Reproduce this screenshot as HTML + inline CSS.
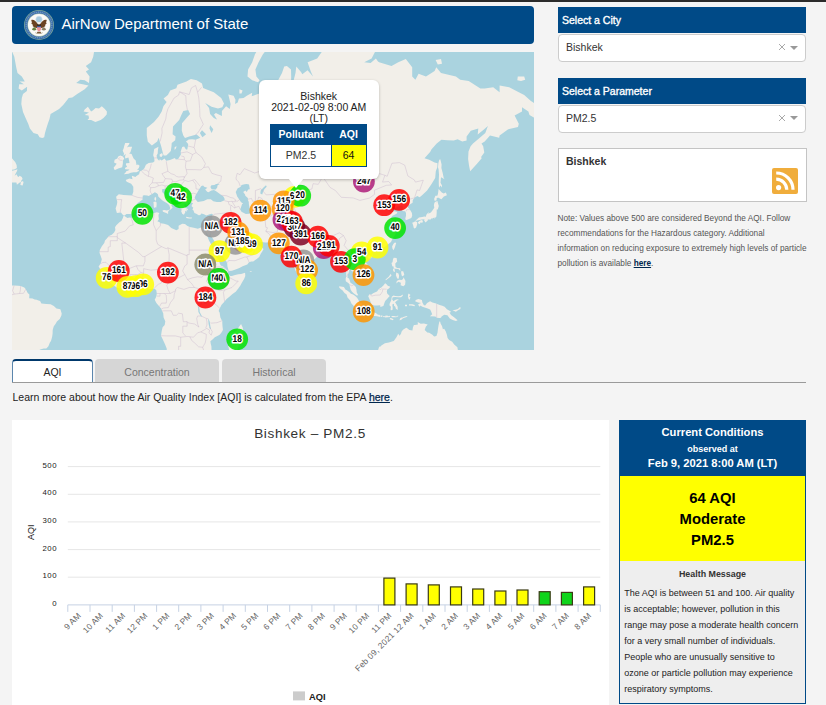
<!DOCTYPE html>
<html><head><meta charset="utf-8"><title>AirNow Department of State</title>
<style>
*{box-sizing:border-box;margin:0;padding:0}
html,body{width:826px;height:705px;overflow:hidden}
body{background:#f4f4f4;font-family:"Liberation Sans",sans-serif;font-size:10.5px;color:#222;position:relative}
.abs{position:absolute}
#topbar{left:0;top:0;width:826px;height:2px;background:#2b2b2b}
#hdr{left:12px;top:6px;width:522px;height:38px;background:#004a87;border-radius:4px}
#hdr .t{left:49.5px;top:9px;font-size:15px;line-height:18px;color:#fff;white-space:nowrap}
#map{left:12px;top:52px;width:522px;height:298px;background:#aad3df;overflow:hidden}
#mk{transform:scale(.84,1)}
#mk text{text-rendering:geometricPrecision;font-size:9.9px;font-weight:bold;text-anchor:middle;fill:#000;stroke:#fff;stroke-width:3.1px;paint-order:stroke;stroke-linejoin:round;font-family:"Liberation Sans",sans-serif}
.bh{left:557.5px;width:248.5px;height:26px;background:#004a87;color:#fff;font-size:10.5px;line-height:26px;padding-left:4.5px;-webkit-text-stroke:.35px #fff}
.dd{left:557.5px;width:248.5px;height:28px;background:#fff;border:1px solid #ccc;border-radius:4px;font-size:10.5px;line-height:24.6px;padding-left:7.5px;color:#333}
.dd .x{position:absolute;left:219px;top:8px;width:8px;height:8px}
.dd .a{position:absolute;left:231px;top:10.5px;width:0;height:0;border:4px solid transparent;border-top:4px solid #999;border-bottom:0}
#city{left:557.5px;top:148px;width:249px;height:54px;background:#fff;border:1px solid #c4c4c4}
#city b{position:absolute;left:7.5px;top:6px;font-size:10.5px;color:#333}
#rss{left:772px;top:168px;width:26px;height:26px;background:#f0ad3c;border-radius:2px}
#note{left:557.5px;top:210.5px;width:262px;font-size:8.25px;line-height:15px;color:#555;white-space:nowrap}
#note a,#learn a{color:#00264d;font-weight:bold;text-decoration:underline}
#learn a{font-weight:normal;-webkit-text-stroke:.25px #00264d}
.tab{top:359px;height:23px;font-size:10.5px;line-height:27px;text-align:center;border-radius:4px 4px 0 0}
#t1{left:12px;width:81px;background:#fff;border:1px solid #5b86ad;border-top:2px solid #00386b;border-bottom:0;color:#222;line-height:22px}
#t2{left:95px;width:124px;background:#d6d6d6;color:#777}
#t3{left:222px;width:104px;background:#d6d6d6;color:#777}
#tline{left:12px;top:381.5px;width:794px;height:1px;background:#9a9a9a}
#learn{left:12.5px;top:391px;font-size:10.5px;line-height:13px;color:#222;white-space:nowrap}
#chart{left:12px;top:420px;width:596.5px;height:290px;background:#fff}
#cc{left:619px;top:420px;width:187px;height:284px;border:1px solid #004a87;background:#eee}
#cc .h{left:-1px;top:-1px;width:187px;height:56px;background:#004a87;color:#fff;text-align:center;font-weight:bold}
#cc .y{left:0;top:55px;width:185px;height:84.5px;background:#ffff00;color:#000;text-align:center;font-weight:bold;font-size:14.8px;line-height:21px;padding-top:11.5px}
#cc .hm{left:0;top:147.5px;width:185px;text-align:center;font-weight:bold;font-size:8.9px;line-height:10px;color:#333}
#cc .tx{left:4.2px;top:164px;width:185px;font-size:9px;line-height:16px;color:#222;white-space:nowrap}
#pop{left:259px;top:80px;width:119.5px;height:98.5px;background:#fff;border-radius:6px;box-shadow:0 1px 3px rgba(0,0,0,.25)}
#pop .l{left:0;width:119.5px;text-align:center;font-size:10.5px;line-height:11px;color:#222}
#tip{left:288px;top:178px;width:0;height:0;border-left:8px solid transparent;border-right:8px solid transparent;border-top:10px solid #fff}
#ptab{left:270px;top:124px;width:97px;height:42.5px;border:1px solid #004a87;background:#fff}
</style></head><body>
<div id="topbar" class="abs"></div>
<div id="hdr" class="abs">
<svg class="abs" style="left:12px;top:4px" width="30" height="30" viewBox="0 0 30 30"><circle cx="15" cy="15" r="15" fill="#7fa89a"/><circle cx="15" cy="15" r="14.3" fill="#3d6fa8"/><circle cx="15" cy="15" r="12.8" fill="none" stroke="#6f97c6" stroke-width="1.3" stroke-dasharray="1.1 .8"/><circle cx="15" cy="15" r="11.5" fill="#b9cdb4"/><circle cx="15" cy="15" r="11" fill="#fbfaf7"/><circle cx="15" cy="9.4" r="3.2" fill="#a8cbdf" stroke="#d4e4ee" stroke-width=".6"/><path d="M14 14.6C12.6 11.6 10 9.3 7.3 9.9c.1 1.3.4 2 .9 2.6-.5.1-.8.3-1 .6.5 1 1.200 1.600 2 2-.4.3-.6.6-.7 1 1.100 1 2.500 1.700 4.200 2.100z" fill="#6a4322"/><path d="M16 14.600C17.400 11.600 20 9.300 22.700 9.900c-.1 1.300-.4 2-.9 2.600.5.100.8.300 1 .6-.5 1-1.200 1.600-2 2 .4.300.6.600.7 1-1.100 1-2.500 1.700-4.200 2.100z" fill="#6a4322"/><ellipse cx="15" cy="16" rx="2" ry="3" fill="#3b2a22"/><circle cx="15" cy="13.200" r="1.200" fill="#f3efe6"/><path d="M13 16h4v3c0 1.300-1 2-2 2.400-1-.4-2-1.100-2-2.400z" fill="#e8737a"/><path d="M13 16h4v1.300h-4z" fill="#3b5a9a"/><path d="M13.800 17.300v3.500M15 17.300v4M16.200 17.300v3.500" stroke="#f6d8d8" stroke-width=".45"/><path d="M12.600 19.500c-1.500 1.200-3 1.300-4.600.3.300-1.600 1.400-2.600 2.800-2.500z" fill="#66803f"/><path d="M17.400 19.500c1.500 1.200 3 1.300 4.600.3-.3-1.600-1.400-2.600-2.800-2.500z" fill="#8a7d62"/><path d="M13.300 21.800h3.400l.8 2.200h-5z" fill="#7a5a3a"/><path d="M11 22.500c2.500 1.500 5.500 1.500 8 0" fill="none" stroke="#c9c3ae" stroke-width=".8"/></svg>
<div class="t abs">AirNow Department of State</div></div>
<div id="map" class="abs"><svg id="mapsvg" width="522" height="298" viewBox="0 0 522 298"><path d="M178.9,27 184.7,28.3 190,31.6 191.1,35.9 195.4,37.8 201.8,40.2 209.2,46 212,51.6 210.3,55.3 206,56.4 199.6,54.8 193.2,51 197.1,55.9 198.1,62.1 201.8,66 205,67.5 202,62.6 203.9,61.1 209.9,64.1 209.9,59 214.1,54.3 217.8,56.9 218.6,52.1 216.3,42.5 221.6,43.7 223.5,47.7 223.1,52.1 225.7,50.5 226.9,46.6 231.6,46 234.8,43.7 240.2,40.8 239.7,44.3 244.4,42.5 247.6,41.4 250.8,43.1 253,40.2 253,35.9 257.2,35.3 262.6,39 269,44.3 266.8,40.2 266.4,34.1 266.4,27.7 270,21 272.2,14.6 274.9,13.9 279,17.5 279.2,24.4 279,34.1 280.7,40.2 279.6,46 276.4,53.2 273.2,53.7 277.5,55.3 282.8,48.8 282.8,41.9 281.8,37.2 281.8,27.7 283.5,21 284.3,14.6 289.2,20.3 290.3,22.3 295.6,18.2 301,24.4 298.8,19.6 295.6,10.2 305.2,6.4 313.8,-5.8 324.4,-10.2 333,-12.8 346.4,-26.1 351.1,-19.3 361.8,-10.2 366,-5.8 359.6,6.4 352.2,10.2 358.6,10.9 363.9,6.4 366,9.4 367.1,10.2 379.5,13.9 386.3,10.2 393.8,7.1 400.2,15.3 400.2,24.4 403.4,27.7 406.6,21.7 414,24.4 422.6,18.9 424.3,15.3 429,21 443.9,24.4 448.2,27.7 456.7,29 468.4,36.6 472.7,36.6 481.2,35.3 487.6,40.2 487.6,33.5 497.2,35.3 506.8,40.2 512.2,43.1 518.6,48.8 529.9,56.4 527.1,59.5 523.9,64.6 521.8,65.6 517.5,63.1 516.4,59.5 510,55.3 510,59.5 502.6,63.6 506.8,71.8 506,75.1 496.2,77.3 487.6,83.5 487.2,85.7 478,83.5 472.7,89.4 469.5,91.5 471.2,94.3 472.3,100.6 469.1,105.1 469.7,106.2 465,111.7 458.2,119.3 457.1,114.1 456.1,107 456.5,99.4 458.6,94.3 461,91.5 468.4,85.2 473.3,80.9 475.9,74.1 471.6,77.8 465.7,82.6 466.3,76.4 458.8,78.7 454.6,84.4 454.6,88.6 450.3,89.4 445.6,87.3 441.8,88.6 435.4,88.2 429.4,87.8 424.7,91.5 419.4,97.5 418.3,99.8 412.5,106.2 417.2,107.7 422.6,110.6 425.5,111.3 425.3,115.2 423.8,119.3 423.2,126 419.4,132.3 415.1,138.5 409.8,143.5 407.6,145.3 405.3,144.1 402.9,145.6 400.8,147.9 400.6,150.7 396.1,153.5 395.9,155.2 398.5,158.4 399.9,161.1 400.2,163.8 399.3,166.1 395.9,167.4 393.8,168.2 393.3,166.4 394,163.8 394,161.1 393.1,159.3 390.6,159 389.9,158.2 391,156.5 390.6,154.1 388.9,153.5 386.3,154.3 382.5,156.3 383.1,154.3 384.6,151 382.5,150.4 379.7,153 377.5,155.2 375,155.7 375.2,157.6 377.5,159 377.8,160.6 380.5,159.8 381.6,159 384.2,159.8 385.4,160.1 384.6,161.7 380.5,163.8 378.4,166.4 380.5,168.2 381.8,171.6 383.5,174.1 383.9,175.1 383.9,176.6 381.6,178.3 384.4,179.3 383.3,182.7 380.7,186.3 379,189.9 376.1,192.3 373.1,194.8 369.2,196.5 367.5,197.4 365.4,198.3 362,199.2 359.4,199.9 359.2,202 358.1,201.3 357.7,199.2 354.9,199 352.6,200.4 350.5,202.6 349.4,204.9 350.9,207.2 353.4,210.5 354.7,211.4 356.2,213.8 357.1,217.1 356.9,220.4 355.8,222.2 353.2,223.7 352.2,223.9 351.1,225.8 347.5,227.8 347.7,225.2 346.8,223.9 344.7,223.5 343.6,221.5 342.1,220 339.4,218.9 339.1,217.3 338.3,217.1 337.2,217.8 337.1,220.4 335.7,222.8 335.5,225.8 337,226.5 337.7,228.2 338.5,230.8 340.9,232.3 341.9,232.9 343.8,234.9 344.5,237.7 344.7,240.2 346.2,243.2 344.7,243.4 341.9,241.5 340,239.8 338.7,237.7 337.9,234.7 337.4,232.5 336.6,231.2 333.8,229.3 333.6,226.9 334.2,224.8 334.2,220.8 334.2,218.2 333.2,216 332.5,213.2 332.1,210.5 330.8,209.4 329.1,210.3 327.2,210.9 326.6,212.1 324.9,211.8 325.5,208.3 323.8,205.4 322.3,202.6 320.6,200.4 319.7,197.4 318,196.9 315.9,198.1 313.8,198.8 310.6,199 309.5,199.2 308.9,202 306.9,203.1 303.3,206.5 301.6,207.8 297.3,210.9 296.3,212.1 294.8,213.8 295.2,218 294.1,221.5 294.1,224.1 292.4,226.3 289.2,228.9 287.1,226.9 286.5,224.8 284.5,220.6 283.5,218.4 281.8,213.8 281.3,212.7 280.3,209.4 279.2,204.9 279.2,202.2 279,199.9 278.6,197.6 277.9,199.7 275.4,200.6 275.2,201 272.4,199 270.9,197.4 273.2,196.2 273.7,196 271.1,196.2 270,195.1 269,194.1 267.7,193.4 266.6,191.6 265.8,190.1 261.7,190.6 256.8,190.6 253.2,190.4 249.8,190.1 247,189.4 245.5,187.5 244,186.1 241.2,187.3 239.1,187.1 234.8,184.4 232.3,181.8 230.8,179.1 228.4,178.6 227.4,179.1 226.1,180.5 227.4,182.7 228.9,185.1 230.8,187.5 231.2,189.4 232.1,191.1 232.7,192 232.3,190.4 233.1,188.5 234,190.4 233.8,192 234.8,193 238,193.2 240,192.5 241.9,190.4 243.6,188.7 244.2,187.8 244.2,190.4 245.1,192.7 248.9,194.4 251.5,196.9 250.4,199.2 248.9,201.5 247.2,204.9 244.4,207.2 241.2,209.4 239.3,209.4 237,210.3 235.3,212.5 230.6,214.3 227.4,216 224.2,217.3 219.9,218.7 216.7,218.9 216.3,217.6 215.4,214.3 215.2,211.6 214.4,209.4 212.4,206.7 210.9,203.8 209.2,202 207.5,199.2 207.1,196.2 205,193.2 203.3,191.1 201.8,188.3 199.8,185.1 198.6,183.9 198.6,180.3 197,184.7 193.3,179.3 194.1,182.7 195.6,184.2 196,185.9 197.1,188.7 198.4,191.1 199.6,193.4 199.8,195.8 202.6,198.1 203.3,200.4 203.3,203.5 205,206 206.2,207.2 207.5,210.5 208.2,212.5 209.2,213.8 210.9,214.3 213.3,216.5 215,218.2 216.3,219.3 215.8,221.3 215.2,221.5 216.7,222.2 217.8,223.9 219.9,223.9 223.1,223 226.3,222.2 229.1,221.9 233.1,220.8 233.3,223.9 232.1,226.9 230.1,230.2 228.4,233.4 226.3,236.6 223.7,239.8 220.5,241.9 217.1,245.1 214.6,247.1 212.4,249.8 211.2,251.1 209.4,253 208.6,254.8 207.3,256.9 206.7,259 207.7,260.7 208,263.3 208.4,265.5 209.7,268.3 210.3,268.7 210.3,270.9 210.5,274.2 210.9,277.5 210.7,278.6 209,281.2 207.3,283 202.8,285.2 200.5,287.5 198.4,289.3 198.8,292 199.4,294.3 199.6,298.7 195.4,301.3 190,313.3 160.2,313.3 158.9,309.9 156.1,305.1 154.8,299 154.7,296.6 152.9,292 150.8,287.5 149,283.7 149.7,279 150.6,275.3 152.7,272.9 153.3,269.2 151.6,265.5 151.2,261.2 150.1,259 149.1,256.5 146.7,253.7 144.4,251.1 142.7,247.7 144,245.3 144.4,244.1 144.8,241.3 144.2,237.9 142,236.6 138.8,237 136.7,237 134.6,234.4 131.2,232.5 129,232.7 126.5,233.2 123.5,234.4 119.6,235.9 117.5,235.3 115.4,234.9 111.1,235.5 107.9,236.8 104.7,235.5 100.9,232.7 98.7,231.2 95.7,228 94.7,225.8 92.8,223.7 91.7,222.6 90.6,220.6 88.1,219.8 88.3,217.3 86.6,214.5 88.7,211.6 89.8,207.2 88.7,204 87.5,200.8 87.8,198.1 90,194.1 92.3,191.1 93,188.5 95.3,186.1 96.4,184.2 99.8,182.7 102.1,180.5 103.4,178.1 103,175.3 104.3,173.3 107.7,170 109.4,169 110.9,165.9 111.3,164.3 112.5,164 115.4,165.9 117.5,165.6 119.6,166.1 122.6,164.6 126,162.7 130.3,161.7 134.6,161.4 137.8,161.1 140.5,161.4 144.8,160.3 147.4,160.9 146.5,162.7 146.5,164.3 146.9,167.2 145.4,169.3 147.6,170.3 148.6,171.3 152.1,171.8 156.1,173.1 159.3,176.1 164.4,178.3 166.6,177.1 166.6,173.8 170.2,171.8 173,172.1 175.1,173.8 177.7,175.1 181.9,175.8 185.8,176.8 187.7,176.1 190,175.3 192,175.3 192.8,176 196,176.3 197.4,175.3 198.6,172.1 199.6,169.3 200.5,166.7 200.3,165.1 200.3,163 201.1,162.2 199.6,161.7 197.7,162.2 194.3,163.5 192,162.2 189.4,161.4 188.3,163 186.8,163.3 184.3,161.7 182.4,161.1 181.5,158.4 180.4,157.4 181.3,155.7 179.6,154.3 179.8,153 181.1,151.3 179.4,150.7 176,150.4 175.7,152.4 174.7,153 172.8,151.3 172.3,153.2 173,154.9 174.2,157.1 175.1,159.4 173,158.7 173.4,160.1 171.9,162.7 170.2,161.7 169.1,159 170.2,157.6 169.1,157.4 168.1,155.7 166.6,153.8 165.3,151.6 165.3,149.3 165.1,147.3 163.6,146.1 162.5,145.4 158.9,142.9 156.3,141.2 154.6,137.6 153.6,138.9 153.1,136.7 150.1,137.3 150.1,140 152.7,142.6 154.2,146.1 156.5,147.6 158.5,147.6 160,149.9 162.3,151.3 163.2,153.5 160.2,151.8 159.3,153.2 160.6,155.7 157.4,158.6 158.2,156 157.2,153 154.8,151 151.6,149.3 149.9,147.9 147.8,146.1 146.3,144.4 145.9,142.3 144.8,141.2 142.9,140.3 140.1,142.1 139.5,142.3 136.7,144.1 135.2,143.5 132.4,143.2 130.9,143.5 130.5,145.9 130.7,147.6 128.6,149 125.6,151 123.3,154.3 124.3,156.3 122.2,159.5 119.2,161.9 114.5,161.9 112.5,163.5 112,163.8 110.5,162.5 109,160.6 104.9,161.1 103.6,156.5 104.9,152.4 105.3,149.9 104.1,144.7 106.8,142.3 111.7,142.9 115.8,143.2 120.1,143.4 121.3,139.7 121.3,136.7 121.3,134.8 119.2,131.7 114.7,129.8 113.7,127.9 117.5,126.6 120.5,127.2 119.8,123.7 123.5,125 124.1,124.3 127.1,122.3 127.8,119.5 130.3,118.3 132.4,116.2 133.9,112.7 136.7,111 141,110.6 142.5,109.2 142.2,105.9 141.2,103.2 142.2,97.1 146.5,94.7 145.9,97.9 145.7,101.4 144.6,103.6 145,105.9 145.7,107.3 147.2,108.8 147.8,107.3 149.7,108.4 152.5,106.6 154.2,108.8 158,108.1 162.9,105.9 163.8,107.5 165.9,107.2 166.6,106.2 168.9,102.5 168.7,99.4 170.2,95.1 172.1,94.5 174,97.5 175.3,97.5 176,93.5 176.2,91.9 174,89.4 176.7,87.6 180.4,87.3 183.6,87.8 188.3,85.7 184.7,82.6 177.2,84.4 173,86.1 171.3,83.5 169.8,78.7 170,71.3 174.5,66 178.1,62.1 176.2,58 171.3,59 169.1,63.6 167.2,68 161,74.6 160.6,82.2 163.6,84.4 163.2,88.2 159.7,91.1 159.5,94.3 158.8,98.9 157.2,100.8 154.2,103.6 151.6,103.6 151,101.4 149.3,94.7 147.8,89.8 146.7,85.7 145.2,89.4 139.9,93.5 135.8,89.8 134.8,83.5 134.8,76 142,69.9 146.7,64.6 149.7,59.5 151.4,54.3 154.6,49.9 151.6,46.6 155.9,43.1 158.2,38.4 164.3,36.2 165.5,32.8 174.5,29.6ZM30.2,86.1 27.5,85.2 25.8,82.2 21.5,80.9 17.9,76.4 16.2,71.8 13.6,66 11,60 9.3,52.1 9.8,46 11,41.9 14.9,39 15.1,34.7 9.8,38.4 6.6,36.6 7.2,32.2 11.9,32.2 7.6,29.6 12.8,29.6 9.8,24.4 5.5,21 4.2,15.3 2.3,4.8 -4.1,-10.2 -4.1,-51.6 83.4,-51.6 81.2,-10.2 82.3,-1.6 81.2,4.8 79.1,10.2 73.8,13.9 77,17.5 73.8,19.6 77.6,24.4 77,30.9 72.7,28.3 68.4,27.7 64.2,30.9 70.6,32.2 76.5,33.5 72.7,37.2 65.2,41.9 60.3,45.4 56.7,46 51.4,52.7 47.1,56.9 43.7,59 38.6,62.1 37.5,67 35.8,71.8 34.3,76.4 33,80.9 32.2,85.2ZM83.4,69.9 88.7,68 91.5,66 94.7,62.6 94.9,59.5 92.8,56.9 89.8,54.3 87,56.4 83.6,55.9 80.8,58.5 79.1,59.5 75.9,54.8 72.7,57.4 71.6,59.5 77,60.5 72.7,63.1 76.5,63.6 77,66.3 75.5,68 79.1,68ZM111.7,122.3 116.4,121.7 118.8,120.7 121.8,120.3 124.5,120.2 126.9,119 126.9,117.9 125,117.6 126.7,116.2 127.6,113.8 126,112.6 124.5,113.1 124.1,110.6 123.7,108.4 121.6,106.6 120.9,105.1 119.6,102.1 117.1,101.4 118.4,100.2 119.4,97.1 120.1,94.7 116.4,94.7 114.9,95.5 117.3,91.9 117.4,90.9 113.2,91.1 112.2,93.9 111.7,96.3 110.7,98.7 112,101.4 111.5,104 113.7,101.7 113,105.1 113.4,106.4 116.4,105.5 117.1,108.4 117.5,111 114.1,111.3 113.9,113.1 115.2,114.5 113,115.9 113.2,117.3 117.5,117.4 116.4,118.6 114.3,119.3 113.2,121ZM103,117.9 106.2,116.6 110.2,115.2 110.9,111.3 110.9,108.8 112.2,106.6 110.9,104.4 108.3,103.6 106.2,104.4 105.3,106.6 102.6,107.7 102.1,110.6 104.7,111.7 103.2,113.8 101.7,115.5 102.1,117.3ZM246.1,30.3 240.2,28.3 235.5,24.4 236.1,17.5 240.2,10.2 242.9,2.4 247.6,-5.8 256.2,-14.6 269,-19.3 264.7,-10.2 254,-1.6 250.8,2.4 246.6,10.2 243.4,17.5 244.4,24.4 247.6,28.3ZM227.4,37.2 230.6,38.4 229.5,41.4 227.4,41.4ZM505.8,24.4 512.2,24.4 513.2,27.7 509,29 505.3,28.3ZM423.6,7.9 429,7.1 430,11.7 425.8,12.4ZM428.3,107.3 429.6,112.4 429.4,115.9 430.7,121 431.7,126 432.6,127.2 429,125.3 428.5,130.8 430,133.6 429.8,135.4 428.5,133.6 427,135.7 426.8,132.3 426.8,127.6 427,122.7 426.6,117.6 426,115.2 426.4,111 427.3,107.7ZM426.6,137 429.8,140.6 431.7,141.5 433.9,140.6 434.9,143.2 431.9,144.4 429.4,147.3 426,145.6 424.5,146.4 424.7,147.9 422.8,149 422.1,147 423.4,143.8 425.3,143.8 426,141.8ZM424.5,148.7 425.5,149.3 426,151.6 426.8,154.1 425.8,157.6 424.7,157.6 424.7,161.1 424.4,164.6 422.3,166.7 422.3,164.8 421.7,166.1 420.6,165.9 420.1,167.4 419.8,166.1 418.7,167.4 416.2,167.4 415.9,166.4 415.9,168.2 413.6,170.4 412.1,168.5 412.5,167.2 409.8,167.4 406.3,168.2 403.3,169.1 404.2,168 407,165.4 410.2,165.1 412.5,164.6 414,164.8 414.2,163 416.8,159.8 416.2,161.7 418.9,160.6 420.4,158.4 422.3,155.7 421.9,153.2 422.3,151.3 423.2,149.6 424.3,150.4ZM403.1,169.3 404.9,170 405.3,172.1 404.1,175.6 402.7,176.6 401.8,176 401.2,173.6 400.8,172.3 400.2,170.8 402.1,170ZM409.9,168.1 411,168.9 410.2,170.9 408.7,170.3 407.6,172.3 405.5,170.7 407.6,168.8ZM383.1,190.4 384.2,191.1 382.7,195.8 381.6,198.3 380.5,196.7 380.1,194.6 381.2,192.3 382.2,190.9ZM360.1,202.4 360.7,203.5 359,206 357.5,206.7 355.8,206 355.6,204.2 357.3,202.9ZM381.7,205.7 384.6,206 385.2,209.4 383.3,211.6 383.5,214.9 385.2,216 388.2,216.3 388.4,219.1 386.3,217.1 383.1,216.7 381.3,216.6 381.9,214.7 380.3,214.3 379.5,210.9 380.5,210.3 381,207.2ZM391.6,225.2 393.5,229.1 393.1,232.7 391.4,234.2 388.6,233.2 388.9,230.8 386.3,229.7 384.3,231.4 384.8,229.1 387.1,227.8 389.7,228 391,226.9ZM389.1,219.3 391.2,219.3 392.3,222.6 391,224.3 389.9,224.1 389.3,221.9ZM384.2,220.6 386.5,221.5 387.1,223.7 386.7,226.7 385.2,226.5 384.2,223.9 383.9,223.2ZM381,217.1 382.7,217.3 382.9,219.8 382,220 381,218.2ZM378.8,221.7 379.5,223.7 377.1,225.8 373.9,228.2 373.5,227.4 376.7,224.8ZM373.1,231.2 371.4,233.4 369.2,235.5 367.1,236.8 365,239.4 361.1,241.3 359.2,242.8 357.7,241.9 356.2,244.3 357.1,246.2 358.6,250 359.2,252.6 362.4,253.5 365,253.5 368.2,253.2 368.4,255 371.4,253.9 372.4,250.9 373.2,248.9 374.6,247.5 377.7,244.1 375.2,241.5 374.8,239.2 375.4,237.2 376.9,236.6 378.3,234.8 375.8,233.7 374.3,232.1ZM327.2,234.2 331.9,235.1 333.6,237.7 334.5,238.1 337.2,240 338.9,241.7 341.1,242.6 343.2,243.9 345.1,245.8 346.6,248.3 347.9,251.1 349.8,251.3 350,253.2 349.8,255.8 349.6,258.8 348.5,258 347,258.8 344.5,256.7 342,254.3 339.4,251.5 338,248.2 335.5,245.6 334.6,242.6 332.5,241.1 330.4,238.3 328.9,237.2 327.2,235.5ZM350.1,258.8 351.7,259.2 352.2,258.9 354.9,259.6 355.5,260.5 359.4,261.1 360.5,259.9 361.8,260.5 363.9,261 364.4,261.6 366,262.7 367.1,262.7 367.9,262.9 368.2,264.9 365,264.2 362.8,264 360.7,263.8 358.6,262.9 356.4,262.7 354.3,262.9 351.1,262 351.1,261.2 348.5,260.7ZM368.4,263.5 370.5,263.5 370.3,264.8 369.4,265 368.4,264.2ZM371.4,264 372.9,264 372.6,265.3 371.1,265ZM373.1,263.8 375.2,263.5 376.3,264.2 377.8,263.8 378,264.9 375.6,265.3 373.1,265.5ZM379.7,264 382,264 384.2,264.4 386.1,263.5 386.3,264.2 384.2,265.3 381,265.3 379.5,265ZM377.8,266.1 379.9,266.3 381.6,267.6 381,268.3 378,267.2ZM387.4,268.3 388.4,266.1 390.6,265.3 393.8,264.2 395.5,264.1 394.8,265 391.6,266.1 388.9,268.1ZM391,242.6 388.4,244.1 386.3,244.3 383.1,244.1 381.6,243.4 379.9,244.5 379.5,246.2 379.3,248.1 378.2,250.5 377.5,252 377.7,253.8 379,254.7 378.6,257.1 378.8,258.2 380.5,258.1 380.7,255.8 380.3,252.6 382,251.7 382,253.7 383.3,254.8 383.9,256.7 385.7,258 385.7,254.7 384.8,253 383.9,251.5 383.1,250.3 385.4,248.3 387.1,247.9 385.2,247.3 383.1,248.1 381.5,249.2 380.1,247.3 380.7,245.3 383.1,245.1 386.3,245.2 389.1,245.3 390.6,244.1ZM396.7,241.5 398.5,243 397,244.5 398.5,245.6 397.4,247.9 396.5,246.8 395.9,244.3 396.1,242.4ZM397,252.2 400.2,252.2 402.9,253 402.5,254.3 399.1,253.5 397,253.5ZM392.9,252.8 395,252.8 395,254.3 393.1,254.3ZM403.8,247.9 406.3,246.9 409.9,248 410.4,250.5 411.9,253.2 413.2,253.5 415.1,251.1 418.1,249.3 420.4,250.5 424.1,251.6 427.6,252.9 430.3,253.8 432.6,254.7 434.9,257.3 437.9,259 439.3,260.1 437.5,260.6 439,262.9 442.4,265.5 445.6,268.2 443.9,268.9 440.7,267.9 437.8,266.6 435.4,263.3 432.2,262.8 429.6,264.4 429,265.7 427.3,266.1 424.7,265.7 423.4,264.4 417.9,264.2 420.2,262.2 418.9,259 418.1,257.5 415.7,256.6 411.9,255.2 409.8,254.5 408.7,253.5 407.4,254.7 406.1,252.5 407.6,251.5 409.3,251.1 406.1,250.5 403.1,249.2ZM448.6,255.2 448.4,256.9 446,258.2 443.9,259.7 440.5,258.2 443.5,257.7 446,256.9 447.3,255.4ZM368.2,313.3 365.8,299 367.4,293.9 367.7,295.3 369.4,293.5 372.9,291.2 376.9,290.4 381.8,289.1 384.6,285.1 386.2,281.7 387.6,283.7 389.1,281.5 389.5,279.7 391,277.7 393.8,276.1 394.6,275.8 397.4,278.1 400.4,278.4 401,275.3 401.9,273.1 403,273 405.9,272.4 405.7,270.1 408.7,271.8 411.9,271.6 415.7,272.4 413.8,274.8 412.7,277.9 415.3,280.6 417.2,280.8 420.4,282.8 422.1,284.6 424.4,284 425.5,280.8 425.9,277.5 426.5,273.4 427.3,269.8 428,269.2 428.7,271.8 430,274 430.9,277.2 432.2,276.8 433.8,279.6 434.9,282.8 435.6,285.9 437.1,288.1 440.2,289.8 442.2,292.4 445.4,295.3 445.8,297.8 447.7,299 450.3,313.3ZM294.8,225.2 297.1,227.8 298.6,231.2 295.8,233.5 295,233.4 294.2,231.4 293.9,228.6 294.4,227ZM229.1,272 226.9,275.1 224.8,278.4 222.7,280.1 218.6,281.2 217.8,283 217.8,285.2 218.6,289.5 216.3,294.3 217,297.5 217.8,301.3 220.3,302.7 224.2,301.3 225.7,296.6 227.2,292 229.3,285.6 230.2,282.8 231,280.6 230,279.2 231.5,279.2 230.6,275.3 229.5,272.9ZM157.2,157.8 156.1,159.8 156.1,162.1 154.3,161 150.9,159.8 150.6,158.3 152.4,158 154.8,158.4ZM143.5,149.4 144.6,150.4 144.6,153 144.3,155.4 143.3,155.2 142.4,156 141.8,154.9 141.6,151.4 141.4,150.1ZM144,144.4 144.2,147.3 143.5,149 142.4,147.6 142.6,145.6 143.7,145.3ZM174.2,164.8 175.5,165.1 177.4,165.5 180,165.6 179.6,166.4 176.8,166.5 174.2,165.9ZM197.7,164.6 196.4,166.5 194.4,167.5 193,167.1 192.8,166.1 194.9,165.5ZM130.5,153.2 131.2,153.8 130.5,154.9 129,154.3ZM173.4,155.7 175.5,156.8 176.2,158.4 174.5,157.4ZM237.8,218.9 240,219.1 239.1,219.8 237.8,219.5ZM150.1,101 150.8,102.9 149.5,105.1 147.8,104.4 147.6,102.5ZM164.4,93.9 164.2,95.9 162.7,97.9 162.5,95.5ZM5.5,117.3 4.9,119.3 3.4,122 2.7,123.7 4.6,122.3 5.5,124.3 6.6,125 7.6,123.7 9.8,125.1 10.6,126.9 9.3,128.5 9.1,130.1 11,128.9 11.5,130.6 10.6,133.4 8.3,133 8.7,131.4 8.7,129.8 4.9,132.8 4.4,130.4 1.2,130.4 -4.1,130.4 -4.1,119.3 2.3,118.3ZM2.3,117.6 4.9,115.9 4.6,113.1 3.2,109.9 1.4,108.1 -0.9,105.1 -4.1,101.4 -14.8,101.4 -14.8,119.3ZM-4.1,233.4 2.3,233.6 6.1,233.7 8.7,233.9 12.3,235.6 13.8,237.2 15.7,240.9 17.4,242.6 17.2,246.2 20.6,246.6 22.6,247.5 24.7,247.7 25.8,248.3 28.1,249 29.4,251.5 34.3,252 38.6,252.3 41.8,254.1 44.5,256.5 47.1,257.1 48.3,257.2 48.8,258.6 49.7,261.4 49.4,263.4 47.7,267 44.9,269.6 43.5,272 41.8,274.2 40.7,278.1 40.6,281.8 40.1,285 39,289.1 37.9,290.4 36.4,294.3 34.3,296.5 31.7,296.6 28.3,297.6 25.1,299 20.4,302.5 17.2,313.3 -4.1,313.3ZM533.5,59 542,54.3 536.7,44.3 544.2,34.1 550.6,21 550.6,85.2 538.8,76.4 542,69.4 536.7,64.6ZM525,68.5 530.3,70.4 528.2,71.8 525,70.4Z" fill="#f2efe9"/><path d="M185.8,149.9 191.7,148.9 195.4,147.3 198.8,147.3 201.3,149.3 204.8,150.1 208.6,150.1 212.6,148.3 212.6,146.7 211.4,144.4 208.6,142.6 204.5,139.4 202,137.9 199.4,138.5 196.4,140.3 195.2,139.7 193.2,137.4 195.4,135.7 192.2,134.8 191.1,133.6 189.4,133.9 187.3,137 185,140.9 183.4,143.8 182.6,145.9 183.6,147.6 185.1,149.3ZM202,137.6 199.6,137.3 198.4,135.1 199.4,133.3 202.4,133.1 204.1,132 206.9,131.7 207.7,132 205.6,133.3 205.2,135.4 203.7,137.6ZM225.7,136.3 223.7,140 225.2,144.4 226.9,147 228.9,150.1 231.2,151.8 230.1,152.1 229.1,154.9 228.2,157.4 229.5,159.8 233.8,161.9 237,161.7 239.1,161.1 238.7,158.4 237.4,154.9 237,153 236.8,151 236.8,150.1 235.9,147.9 235.9,145.9 233.3,143.8 233.1,142.5 231.2,140 233.3,138.5 234.8,140 236.1,137.6 237.8,137.3 237.4,134.5 237,132.6 234.8,132 232.7,132.3 229.5,133 228.9,134.5 227.4,135.4ZM254,133.3 251.5,135.4 248.7,138.5 248.3,141.5 250.2,142.6 251,140 252.5,137 254.7,134.8ZM345.3,117.6 349.6,114.8 353.2,111.7 356.4,107 358.1,102.5 356.9,103.2 354.3,108.8 350.7,112.4 346.8,115.9ZM281.8,133.3 282.8,134.8 282.2,138.5 283.9,137 287.1,134.2 291.4,134.2 292.9,133.3 290.3,133 286,133ZM192.2,245.6 195.4,245.6 196.9,246.8 196.2,249.4 194.3,251.7 192.2,251.5 191.5,249.4 191.5,247.3ZM190.5,85.2 194.1,82.2 190,78.2 187.9,80.9 189.6,83.9ZM199.6,80.9 201.3,77.3 198.1,73.2 197.5,76.4 198.6,79.1ZM186.4,253.5 187.5,256.9 187.7,260.1 190.2,264.8 189,264.4 186.4,260.1 186.2,256.9ZM196.4,266.6 197.7,269.8 198.4,274.2 199,277 197.7,276.4 196.6,272 196.2,267.6Z" fill="#aad3df"/><path d="M119.2,166.1 120.3,169 121.3,172.8 117.7,173.8 113.2,179.1 105.3,181.5 105.3,184.7M95.7,184.7 105.3,184.7 105.3,188.7 98.3,188.7 98.3,194.6 96.2,195.1 96.2,199.7 87.6,199.7M105.3,185.6 113.7,191.1 126.5,200.4 130.9,204.7 132.9,204.5 149.5,194.6M149.5,194.6 145.7,192.3 144.2,188 144.2,178.6M144.2,178.6 148.4,173.8 148.4,171.0M144.2,178.6 141.6,172.8 141.4,167.7 142.2,161.4M113.7,191.1 109.8,191.1 112.2,212.7 103.8,212.9 101.1,212.9 97.9,214.3 94,210.3 90.8,210.5 88.7,211.6M132.9,204.5 132.9,209.6 131.4,213.8 124.3,213.8 118.6,216 116.4,217.3 112.6,220.4 112.2,223.9 106.8,224.1 104.1,219.5 99.6,219.5 97.9,214.3M99.6,219.5 94.7,219.3 91.9,218.9 88.3,219.8M88.5,216.9 94,216.9 94,217.8 88.3,218.0M94.7,219.3 94.7,221.5 91.9,222.6M95.5,226.9 100,224.8 101.9,228 106,229.9M101.9,228.4 99.6,231.2M106.8,224.1 107.5,228 106,229.9 108.1,232.7 107.9,236.8M131.6,216.7 138.8,218.2 145.2,217.6 152.9,216.7 157,211.6 157.2,202.6 155.9,195.8 154.2,196.7 149.5,194.6M155.9,195.8 175.1,203.8 175.1,202.6 177.2,202.6 177.2,198.1 177.2,175.1M177.2,198.1 202.6,198.1M175.1,203.8 175.1,212.3 172.8,213.8 170.6,218.9 172.8,222.6 164.4,226.9 157,230.2 157,224.8 154.8,218.2M154.2,218.2 153.3,222.6 151.2,226.9 149.1,231.2 146.3,232.3 142.2,236.2M144.8,241.5 152.3,241.5 158.2,241.5 156.1,237.7 154.8,233.4 157,230.2M158.2,241.5 163.6,238.7 163.6,237 165.5,235.5 171.9,237.4 177.2,235.5 182.4,235.5M172.8,222.6 174,224.8 175.5,227.6 179.4,231.2 182.4,235.5M175.5,227.6 180.4,225.8 185.8,224.8 190,225.2 193.7,220.4 194.7,220 196.6,225.8 200.7,219.3 201.8,215.4 202.8,209.4 206.2,207.2M201.8,215.4 207.1,214.9 211.4,215.4 214.4,219.3 215.8,218.9M214.4,219.3 213.1,222.6 215.6,222.6 217.8,225.8 224.2,229.1 226.3,229.1 219.9,235.5 213.5,237.7 208.2,238.7 200.7,236.6 200.5,236.4 199.2,234.9 198.1,233.4 194.3,229.1 196.6,225.8M213.3,237.7 211.4,240.2 212.6,249.8M200.5,236.4 196.4,237.2 197.5,244.1 196.4,245.8 196.4,248.3 204.1,252.6 207.5,256.2M196.4,237.2 190,238.7 189.8,237.9 186.8,236.6 182.4,235.5M190,238.7 190.7,241.5 188.3,244.1 187,248.3 185.8,252 186.4,255.6M187,248.3 189,248.3 196.4,248.3M189,248.3 189.6,251.3 187.5,255.6M185.8,251.1 187.5,252.2 189.6,251.3M210.1,268.7 205,270.7 199.6,271.1 198.4,270.9M190,264.4 194.1,266.3 196.2,266.8M189.4,264 185.6,264 184.7,266.6 185.8,272.6 187,275.1 182.6,272 176.2,270.9 175.1,269.6 175.1,274.2 170.8,274.2 170.8,280.8 173.6,284.1M175.1,269.6 171.3,269.8 170.4,261.8 166.6,261.2 164.4,263.3 161.2,263.3 159.3,258.8 151.6,258.8 150.1,259.0M149.5,256.9 151.6,256 156.3,255.6 158.5,250.5 161.9,246.2 162.3,241.9 163.6,238.7M147.6,254.5 149.5,251.1 154.2,251.1 154.6,248.3 154.2,243.4 152.3,241.5M144.8,244.1 148,244.1 148,241.5M149.1,283.7 154.2,283.9 163.4,283.9 168.7,285.2 176.2,284.4 177.9,284.8M168.7,285.2 168.7,294.3 166.6,294.3 166.6,301.3M177.9,284.8 179.8,288.6 182.6,290.9 186.6,294.8 190.7,295.3 192.2,300.1M177.9,284.8 181.5,285.2 185.6,280.8 188.8,279.9 194.7,276.4 193.9,275.5 194.9,273.1 194.9,269.8 194.3,266.8M188.8,279.9 190.7,280.8 194.3,282.3 194.1,286.4 193.2,290.9 190.7,295.3M194.7,276.4 197.5,278.1 197.1,280.8 199.2,283.2 200.3,279.7 197.7,275.3M117.3,235.3 118.4,229.1 118.1,225.8 117.9,222.6 123.9,222.6 125,226.9 126.5,233.2M125.8,222.6 127.3,232.9M129.7,232.5 129.9,226.9 131.6,221.1 131.6,216.7M123.9,222.6 125.8,222.6 129,220.6 131.6,221.1M124.3,213.8 126,217.6 129,220.6M112.2,223.9 114.7,225.2 117.9,225.0M196.9,175.8 198.4,180.3M198.6,180.5 200.9,181 203.9,179.1 205,177.8 202.8,175.3 207.5,173.6 213.7,176.3 219.3,181.3 222.9,181.3 225.2,181.3 227.2,182.7M223.3,181.3 225.7,178.8 227.4,179.1M227.4,179.1 225.7,176.6 222,172.8 221.6,170.3 221.6,166.4 220.8,163.8 219.5,160.9 214.4,160.9 205,161.9 202.2,162.2 200.7,164.0M214.4,160.9 212,162.5 211.4,168 206.7,170.5 202.4,173.3 200.1,172.3 198.6,180.3M206.7,170.5 207.5,173.6M198.8,171.3 200.3,170.8 201.6,167.4 200.7,167.4M215.2,210.7 216.7,208.5 223.1,208.7 232.7,205.1 234.8,204.9 237.2,210.3M234.8,204.9 241.2,202.6 242.5,198.1 241.7,196.5 236.1,196 234,193.0M241.7,196.5 242.9,193 244,191.3M219.5,160.9 218.6,157.6 218.6,154.6 219.5,153.5 217.1,152.7 216.3,149.6 212.4,148.7M209.2,143.2 214.6,143.8 218.8,145.6 221.6,146.1 223.1,147.6 224.8,149.6 227.6,147.6M216.3,149.6 219.9,149.3 223.3,149.9 223.1,147.6M219.9,149.3 221.8,152.4 223.1,154.3 222.5,156.0M219.5,153.5 222.5,156 225.9,154.6 226.9,154.3 228.2,157.4M239.1,160.3 242.3,158.4 245.9,157.9 248.7,159.5 250.4,159.8 254.5,162.2 254.5,164.8 253.2,169 253.8,175.3 255.5,175.8 253.8,179.3 257.9,182.7 258.9,185.9 258.7,187.3 255.3,190.6M253.8,179.3 260.6,180.5 265.3,180 265.6,176.8 269.4,174.6 271.7,174.3 273.2,171.6 275.6,169 276.4,166.4 275.8,163.8 278.6,161.4 282.8,161.1M282.8,161.1 281.3,160.1 276.6,160.3 275.2,157.4 273.7,159.5 272.2,160.9 268.5,160.6 265.8,160.1 263.8,160.3 258.5,164 254.5,164.8M265.8,160.3 259.8,155.2 254.9,149.6 251.9,149.6 249.8,146.4 246.6,145 245.5,149.3 243.4,149.3 243.4,138.5 248.9,136.7 254.2,142.9 262.4,142.3 264.9,146.4 269,149.6 275.2,146.4 275.4,145 280.7,145 282.2,143.8 285.4,144.7 292.9,145 295,146.7M243.4,149.3 240.6,149.3 239.5,146.4 235.7,147.3M295,146.7 289.9,150.1 283.7,151.8 281.6,154.3 283.9,160.1 282.8,161.1M281.6,154.3 277.1,154.6 271.7,154.1 271.7,152.4 275.4,152.4 277.3,149.6 273.7,148.7 275.2,146.4M271.7,154.1 267.9,154.3 269.4,158.4 268.5,160.6M275.4,152.4 279.6,153.2 280.7,151.6 277.3,149.6M295,146.7 294.4,138.5 299.9,137 301,131.7 306.3,132.3 310.1,125.6M310.1,125.6 301.8,120 294.6,119.3 290.1,110.6 287.7,107.3 280.5,109.2 274.9,103.6 270.9,104 263,108.1 254.5,108.8 255.3,119.3 251.5,120 248.9,119 242.7,121 232.3,116.6 228,122.7 225.2,121.3 224,126 224.4,127.9 226.7,129.8 228.2,134.2M310.1,125.6 315.3,122.7 320.2,121 325.1,120 331.5,123 334.7,116.9 335.1,115.5 341.9,118.3 344.3,121.7 350,121.7 355.4,125.3 364.3,124.3 367.7,121.7 372.9,123.3M311.2,125.6 313.8,129.2 318,135.4 323.4,138.5 329.3,145.3 341.1,145.9 347.9,148.4 357.5,146.1 362.6,142.3 362.4,138.2 374.3,133.3 379.7,133 376.7,129.5 370.5,130.1 372.9,123.3M372.9,123.3 375.2,124.3 379.9,111.3 387.4,110.6 392.7,113.1 395.9,124 402.3,127.9 403.4,130.1 411.3,128.2 407.6,138.5 405.1,137.9 402.5,145.9 397,147.3 394.8,149 394.6,148.2 389.3,153.0M397.8,157.6 394.8,157.6 394.2,159.3M282.8,161.1 289.9,165.1 286,167.7 283.3,172.8 282.8,176.6 280.3,179.3 277.3,183.9 274.7,184.4 273.4,188.7 275.4,192.7 270.7,192.7 269.4,194.1M289.9,165.1 292.9,172.8 296.7,178.6 306.7,183.2 311.8,184.2 313.6,184.2 317,183.2 319.3,184.4 327.4,180.8 331.5,183.5M296.7,178.6 294.8,182 302.9,185.4 309.5,187.8 311.8,187.8 311.8,184.2M319.3,184.4 320.4,186.8 313.8,187.1 313.6,184.2M331.5,183.5 334.2,188.7 332.1,193.4 336.2,198.1 339.8,199.9 341.9,197.1 345.8,196.2 348.5,195.1 351.5,198.1 354.3,199.2M331.5,183.5 327.6,186.3 325.7,191.1 322.9,195.8 321.4,200.4 320.8,201.0M314,199 313.1,193.4 313.6,190.6 312.5,187.8 315.5,190.6 320.2,190.9 319.1,193 318.7,195.8 320.8,194.1 320.8,199.7M339.8,199.9 337.4,202 332.8,203.3 332.3,207.6 334.7,211.2 333.4,214.9 336.4,220.8 334.5,224.8M337.4,202 339.8,203.5 339.6,208 342.8,207.2 345.8,206.7 347.5,210.5 349,215.2 343.6,215.2 342.3,217.1 343.4,221.1M341.9,197.1 346.8,200.8 345.8,203.8 349,207.2 351.3,210.5 353.2,214.5 353.2,219.8 350,222.6 346.8,223.9M349,215.2 353.2,214.5M337.4,232.5 339.6,233.8 341.7,232.9M357.7,241.9 359.6,244.1 363.3,243.2 368.2,243 370.3,239.8 370.9,237 374.6,237.2M367.1,236.8 368.6,237.7 369.9,236.4 369.2,235.7M424.7,251.7 424.7,265.7M390.6,265.5 390.8,266.3M104.9,147.6 109.8,147.6 109.2,150.1 109,153.8 109,155.7 108.1,160.6M120.1,143.4 125.4,145.3 130.7,146.1M139.9,142.1 138.6,140.3 138.2,138.2 138.8,135.7 136.9,134.2 140.1,130.8 141.4,126 137.6,124.6 136.3,124.3 132.9,122.3 129.4,119.0M136.3,124.3 136.9,122 136.7,120 138.4,115.9 139.3,111.7M131.2,117.9 134.6,118.3 136.7,120.0M154.2,109.2 155,114.1 155.9,119.3 149.9,121.7 153.3,126.6 151.6,130.4 144.4,130.8 140.1,130.8M138.8,135.7 142.9,135.4 146.3,133.9 149.9,133 153.1,133.9 153.3,136.7M144.4,130.8 146.1,132.6 146.3,133.9M153.1,133.9 158,133.3 160.4,129.8 160.4,129.2M153.3,126.6 160,127.2 160.4,129.2 164,129.8 167.6,128.2 171.3,127.9M155.9,119.3 159.1,121.7 162.3,122.7 164.2,124.3 166.6,125 172.3,124.6 172.1,126 171.3,127.9M172.1,126 175.1,121.3 174.2,117.6 173.4,114.8 174,109.2M165.9,107.2 172.5,107.7 174,109.2 178.3,108.8 180.6,102.5 184.1,100.6 182.1,95.5 183.6,87.8M172.5,107.7 172.1,104.7 169.3,104.0M180.6,102.5 175.1,99.8 168.7,101.0M175.7,93.9 182.1,95.5M184.1,100.6 189.8,105.1 193.4,111.7 191.7,115.5M174.2,117.6 181.5,117.6 189,117.9 191.7,115.5 196.4,114.8 199.8,121.3 205,123 209.4,124 208.8,129.2 205.4,132.0M171.3,127.9 176.2,129.5 180.6,128.2 182.8,127.6 188.1,134.2M180.6,128.2 183.8,132.3 184.1,137 187,137.3M172.5,128.9 167.2,135.1 169.6,139.1 172.3,140.9 175.1,142.3 181.5,141.2 184.9,142.3M159.1,134.2 164,136 167.2,135.1M172.3,140.9 172.8,144.4 171.7,146.4 173,149.3 177.2,148.7 180.2,148.2 183.6,147.3M180.2,148.2 179.4,151.0M166.6,153.8 168.7,150.7 172.5,149.6 173,149.3M168.7,150.7 167.6,147.3 166.8,145.6 165.3,147.6M166.8,145.6 167.8,143.8 170,146.4 171.7,146.4M167.6,147.3 170,146.4M157.6,137.9 164.4,137.9 165.1,138.8 165.1,142.9 163.4,145.9M152.9,137 156.5,137 159.1,134.2M157.6,137.9 158.5,140.9 161.4,144.4 163.4,145.9M165.1,138.8 164.4,137.9 164,136.0M165.1,142.9 167.8,143.8M148.2,89.4 150.1,80.9 149.9,76.4 153.8,67 154.4,62.1 155.9,56.9 162.1,46 166.6,43.1 167.6,39.8 173.8,43.7 174.2,51.6 175.4,58.0M167.6,39.8 177.2,42.5 179.4,35.9 183.6,33.5 185.6,40.2 186.8,46 187.7,56.9 187.9,64.6 191.3,72.3 185.8,80.9 183.2,83.1M185.6,40.2 189.6,35.3M110.5,108.4 107.9,108.1 106.4,107 108.3,105.1M142.2,105.9 145,105.9M13.8,237.2 11.5,241.3 7.6,241.5 4.4,241.9 2.3,242.1 -0.9,243.0M8.7,233.9 8.3,238.7 7.6,241.5M2.1,233.6 0.6,238.7 2.3,242.1" fill="none" stroke="#c4aec8" stroke-width=".65" stroke-opacity=".6" stroke-linejoin="round"/><g id="mc" fill-opacity=".84"><circle cx="163.2" cy="141.9" r="10.9" fill="#00e400"/><circle cx="169.1" cy="145.4" r="10.9" fill="#00e400"/><circle cx="130.4" cy="161.8" r="10.9" fill="#00e400"/><circle cx="248.4" cy="158.6" r="10.9" fill="#ff9500"/><circle cx="282.4" cy="144.8" r="10.9" fill="#ffff00"/><circle cx="288.2" cy="143.7" r="10.9" fill="#00e400"/><circle cx="271.7" cy="149.3" r="10.9" fill="#ff9500"/><circle cx="270.6" cy="156.9" r="10.9" fill="#ff9500"/><circle cx="199.8" cy="174.5" r="10.9" fill="#969696"/><circle cx="230.4" cy="189.2" r="10.9" fill="#ff0000"/><circle cx="223.5" cy="191.8" r="10.9" fill="#969696"/><circle cx="233.6" cy="190.4" r="10.9" fill="#ffff00"/><circle cx="240.0" cy="192.4" r="10.9" fill="#ffff00"/><circle cx="218.6" cy="170.8" r="10.9" fill="#ff0000"/><circle cx="226.3" cy="180.6" r="10.9" fill="#ff9500"/><circle cx="207.5" cy="199.2" r="10.9" fill="#ffff00"/><circle cx="271.5" cy="167.7" r="10.9" fill="#ad1a78"/><circle cx="276.4" cy="169.0" r="10.9" fill="#ad1a78"/><circle cx="282.4" cy="175.3" r="10.9" fill="#7e0023"/><circle cx="279.8" cy="169.8" r="10.9" fill="#ff0000"/><circle cx="288.6" cy="182.5" r="10.9" fill="#7e0023"/><circle cx="266.8" cy="191.3" r="10.9" fill="#ff9500"/><circle cx="311.8" cy="196.0" r="10.9" fill="#ad1a78"/><circle cx="305.9" cy="184.7" r="10.9" fill="#ff0000"/><circle cx="316.8" cy="193.9" r="10.9" fill="#ff0000"/><circle cx="291.4" cy="208.5" r="10.9" fill="#969696"/><circle cx="279.4" cy="204.7" r="10.9" fill="#ff0000"/><circle cx="295.1" cy="218.1" r="10.9" fill="#ff9500"/><circle cx="294.2" cy="231.4" r="10.9" fill="#ffff00"/><circle cx="329.0" cy="209.8" r="10.9" fill="#ff0000"/><circle cx="349.7" cy="200.3" r="10.9" fill="#ffff00"/><circle cx="365.5" cy="195.5" r="10.9" fill="#ffff00"/><circle cx="342.8" cy="207.2" r="10.9" fill="#00e400"/><circle cx="351.5" cy="223.1" r="10.9" fill="#ff9500"/><circle cx="351.7" cy="259.5" r="10.9" fill="#ff9500"/><circle cx="193.3" cy="212.5" r="10.9" fill="#8b8b6a"/><circle cx="206.6" cy="226.9" r="10.9" fill="#969696"/><circle cx="206.6" cy="226.9" r="10.9" fill="#00e400"/><circle cx="193.4" cy="245.5" r="10.9" fill="#ff0000"/><circle cx="155.9" cy="220.6" r="10.9" fill="#ff0000"/><circle cx="94.7" cy="225.8" r="10.9" fill="#ffff00"/><circle cx="106.8" cy="219.0" r="10.9" fill="#ff0000"/><circle cx="131.2" cy="232.4" r="10.9" fill="#ffff00"/><circle cx="123.5" cy="234.2" r="10.9" fill="#ffff00"/><circle cx="115.4" cy="234.9" r="10.9" fill="#ffff00"/><circle cx="225.2" cy="287.3" r="10.9" fill="#00e400"/><circle cx="351.9" cy="129.5" r="10.9" fill="#ad1a78"/><circle cx="387.1" cy="147.9" r="10.9" fill="#ff0000"/><circle cx="372.2" cy="153.2" r="10.9" fill="#ff0000"/><circle cx="383.1" cy="176.1" r="10.9" fill="#00e400"/></g><g id="mk"><text x="194.2" y="144.2">47</text><text x="201.3" y="147.7">42</text><text x="155.2" y="164.1">50</text><text x="295.8" y="160.9">114</text><text x="336.2" y="147.1">64</text><text x="343.1" y="146.0">20</text><text x="323.4" y="151.6">115</text><text x="322.2" y="159.2">120</text><text x="237.9" y="176.8">N/A</text><text x="266.1" y="194.1">N/A</text><text x="278.0" y="192.7">75</text><text x="285.7" y="194.7">89</text><text x="260.3" y="173.1">182</text><text x="274.2" y="191.5">185</text><text x="269.4" y="182.9">131</text><text x="247.1" y="201.5">97</text><text x="323.2" y="170.0">225</text><text x="329.1" y="171.3">216</text><text x="336.2" y="177.6">307</text><text x="333.1" y="172.1">163</text><text x="343.6" y="184.8">391</text><text x="317.7" y="193.6">127</text><text x="371.2" y="198.3">215</text><text x="364.1" y="187.0">166</text><text x="377.1" y="196.2">191</text><text x="346.9" y="210.8">N/A</text><text x="332.6" y="207.0">170</text><text x="351.4" y="220.4">122</text><text x="350.3" y="233.7">86</text><text x="391.7" y="212.1">153</text><text x="416.3" y="202.6">54</text><text x="435.1" y="197.8">91</text><text x="408.1" y="209.5">3</text><text x="418.5" y="225.4">126</text><text x="418.7" y="261.8">108</text><text x="230.1" y="214.8">N/A</text><text x="245.9" y="229.2">N/A</text><text x="245.9" y="229.2">40</text><text x="230.2" y="247.8">184</text><text x="185.6" y="222.9">192</text><text x="112.7" y="228.1">76</text><text x="127.2" y="221.3">161</text><text x="156.1" y="234.7">96</text><text x="147.0" y="236.5">96</text><text x="137.3" y="237.2">87</text><text x="268.1" y="289.6">18</text><text x="419.0" y="131.8">247</text><text x="460.9" y="150.2">156</text><text x="443.1" y="155.5">153</text><text x="456.1" y="178.4">40</text></g></svg></div>
<div id="pop" class="abs">
<div class="l abs" style="top:10.5px">Bishkek</div>
<div class="l abs" style="top:21.5px">2021-02-09 8:00 AM</div>
<div class="l abs" style="top:32.5px">(LT)</div>
</div>
<div id="tip" class="abs"></div>
<div id="ptab" class="abs">
<div class="abs" style="left:0;top:0;width:95px;height:20px;background:#004a87"></div>
<div class="abs" style="left:60px;top:20px;width:35px;height:20.5px;background:#ffff00;border-left:1px solid #004a87"></div>
<div class="abs" style="left:0;top:3.3px;width:60px;text-align:center;color:#fff;font-weight:bold;font-size:10.5px;line-height:12px">Pollutant</div>
<div class="abs" style="left:60px;top:3.3px;width:35px;text-align:center;color:#fff;font-weight:bold;font-size:10.5px;line-height:12px">AQI</div>
<div class="abs" style="left:0;top:23.6px;width:60px;text-align:center;color:#333;font-size:10.5px;line-height:12px">PM2.5</div>
<div class="abs" style="left:60px;top:23.6px;width:35px;text-align:center;color:#111;font-size:10.5px;line-height:12px">64</div>
</div>

<div class="bh abs" style="top:7px">Select a City</div>
<div class="dd abs" style="top:34px">Bishkek<svg class="x" viewBox="0 0 8 8"><path d="M1 1l6 6M7 1l-6 6" stroke="#a4a4a4" stroke-width=".95" fill="none"/></svg><span class="a"></span></div>
<div class="bh abs" style="top:78px">Select a Parameter</div>
<div class="dd abs" style="top:104.5px">PM2.5<svg class="x" viewBox="0 0 8 8"><path d="M1 1l6 6M7 1l-6 6" stroke="#a4a4a4" stroke-width=".95" fill="none"/></svg><span class="a"></span></div>
<div id="city" class="abs"><b>Bishkek</b></div>
<div id="rss" class="abs"><svg width="26" height="26" viewBox="0 0 26 26"><circle cx="6.6" cy="19.6" r="2.6" fill="#fff"/><path d="M4.2 11.2a10.6 10.6 0 0 1 10.6 10.6" fill="none" stroke="#fff" stroke-width="3.2"/><path d="M4.2 5a16.8 16.8 0 0 1 16.8 16.8" fill="none" stroke="#fff" stroke-width="3.2"/></svg></div>
<div id="note" class="abs">Note: Values above 500 are considered Beyond the AQI. Follow<br>recommendations for the Hazardous category. Additional<br>information on reducing exposure to extremely high levels of particle<br>pollution is available <a>here</a>.</div>

<div id="t1" class="tab abs">AQI</div>
<div id="t2" class="tab abs">Concentration</div>
<div id="t3" class="tab abs">Historical</div>
<div id="tline" class="abs"></div>
<div id="learn" class="abs">Learn more about how the Air Quality Index [AQI] is calculated from the EPA <a>here</a>.</div>

<div id="chart" class="abs"><svg width="597" height="290" viewBox="0 0 597 290" font-family="Liberation Sans, sans-serif"><text x="45.2" y="185.8" font-size="7.8" letter-spacing=".6" fill="#222" text-anchor="end">0</text><path d="M55.8 157.2H588.3" stroke="#e6e6e6" stroke-width="1"/><text x="45.2" y="158.1" font-size="7.8" letter-spacing=".6" fill="#222" text-anchor="end">100</text><path d="M55.8 129.6H588.3" stroke="#e6e6e6" stroke-width="1"/><text x="45.2" y="130.5" font-size="7.8" letter-spacing=".6" fill="#222" text-anchor="end">200</text><path d="M55.8 101.9H588.3" stroke="#e6e6e6" stroke-width="1"/><text x="45.2" y="102.8" font-size="7.8" letter-spacing=".6" fill="#222" text-anchor="end">300</text><path d="M55.8 74.3H588.3" stroke="#e6e6e6" stroke-width="1"/><text x="45.2" y="75.2" font-size="7.8" letter-spacing=".6" fill="#222" text-anchor="end">400</text><path d="M55.8 46.6H588.3" stroke="#e6e6e6" stroke-width="1"/><text x="45.2" y="47.5" font-size="7.8" letter-spacing=".6" fill="#222" text-anchor="end">500</text><path d="M55.8 184.9H588.3" stroke="#c6d2e4" stroke-width="1"/><path d="M55.8 184.9v7" stroke="#c6d2e4" stroke-width="1"/><path d="M78.0 184.9v7" stroke="#c6d2e4" stroke-width="1"/><path d="M100.2 184.9v7" stroke="#c6d2e4" stroke-width="1"/><path d="M122.4 184.9v7" stroke="#c6d2e4" stroke-width="1"/><path d="M144.6 184.9v7" stroke="#c6d2e4" stroke-width="1"/><path d="M166.7 184.9v7" stroke="#c6d2e4" stroke-width="1"/><path d="M188.9 184.9v7" stroke="#c6d2e4" stroke-width="1"/><path d="M211.1 184.9v7" stroke="#c6d2e4" stroke-width="1"/><path d="M233.3 184.9v7" stroke="#c6d2e4" stroke-width="1"/><path d="M255.5 184.9v7" stroke="#c6d2e4" stroke-width="1"/><path d="M277.7 184.9v7" stroke="#c6d2e4" stroke-width="1"/><path d="M299.9 184.9v7" stroke="#c6d2e4" stroke-width="1"/><path d="M322.1 184.9v7" stroke="#c6d2e4" stroke-width="1"/><path d="M344.2 184.9v7" stroke="#c6d2e4" stroke-width="1"/><path d="M366.4 184.9v7" stroke="#c6d2e4" stroke-width="1"/><path d="M388.6 184.9v7" stroke="#c6d2e4" stroke-width="1"/><path d="M410.8 184.9v7" stroke="#c6d2e4" stroke-width="1"/><path d="M433.0 184.9v7" stroke="#c6d2e4" stroke-width="1"/><path d="M455.2 184.9v7" stroke="#c6d2e4" stroke-width="1"/><path d="M477.4 184.9v7" stroke="#c6d2e4" stroke-width="1"/><path d="M499.6 184.9v7" stroke="#c6d2e4" stroke-width="1"/><path d="M521.7 184.9v7" stroke="#c6d2e4" stroke-width="1"/><path d="M543.9 184.9v7" stroke="#c6d2e4" stroke-width="1"/><path d="M566.1 184.9v7" stroke="#c6d2e4" stroke-width="1"/><path d="M588.3 184.9v7" stroke="#c6d2e4" stroke-width="1"/><rect x="371.9" y="158.1" width="11" height="26.8" fill="#ffff00" stroke="#3a3a14" stroke-width="1.2"/><rect x="394.1" y="163.9" width="11" height="21.0" fill="#ffff00" stroke="#3a3a14" stroke-width="1.2"/><rect x="416.3" y="164.9" width="11" height="20.0" fill="#ffff00" stroke="#3a3a14" stroke-width="1.2"/><rect x="438.5" y="166.9" width="11" height="18.0" fill="#ffff00" stroke="#3a3a14" stroke-width="1.2"/><rect x="460.7" y="169.0" width="11" height="15.9" fill="#ffff00" stroke="#3a3a14" stroke-width="1.2"/><rect x="482.9" y="171.0" width="11" height="13.9" fill="#ffff00" stroke="#3a3a14" stroke-width="1.2"/><rect x="505.0" y="170.0" width="11" height="14.9" fill="#ffff00" stroke="#3a3a14" stroke-width="1.2"/><rect x="527.2" y="171.7" width="11" height="13.2" fill="#0fd41a" stroke="#3a3a14" stroke-width="1.2"/><rect x="549.4" y="172.4" width="11" height="12.5" fill="#0fd41a" stroke="#3a3a14" stroke-width="1.2"/><rect x="571.6" y="166.9" width="11" height="18.0" fill="#ffff00" stroke="#3a3a14" stroke-width="1.2"/><text transform="translate(69.5,196.2) rotate(-45)" font-size="8.4" letter-spacing=".2" fill="#666" text-anchor="end">9 AM</text><text transform="translate(91.7,196.2) rotate(-45)" font-size="8.4" letter-spacing=".2" fill="#666" text-anchor="end">10 AM</text><text transform="translate(113.9,196.2) rotate(-45)" font-size="8.4" letter-spacing=".2" fill="#666" text-anchor="end">11 AM</text><text transform="translate(136.1,196.2) rotate(-45)" font-size="8.4" letter-spacing=".2" fill="#666" text-anchor="end">12 PM</text><text transform="translate(158.2,196.2) rotate(-45)" font-size="8.4" letter-spacing=".2" fill="#666" text-anchor="end">1 PM</text><text transform="translate(180.4,196.2) rotate(-45)" font-size="8.4" letter-spacing=".2" fill="#666" text-anchor="end">2 PM</text><text transform="translate(202.6,196.2) rotate(-45)" font-size="8.4" letter-spacing=".2" fill="#666" text-anchor="end">3 PM</text><text transform="translate(224.8,196.2) rotate(-45)" font-size="8.4" letter-spacing=".2" fill="#666" text-anchor="end">4 PM</text><text transform="translate(247.0,196.2) rotate(-45)" font-size="8.4" letter-spacing=".2" fill="#666" text-anchor="end">5 PM</text><text transform="translate(269.2,196.2) rotate(-45)" font-size="8.4" letter-spacing=".2" fill="#666" text-anchor="end">6 PM</text><text transform="translate(291.4,196.2) rotate(-45)" font-size="8.4" letter-spacing=".2" fill="#666" text-anchor="end">7 PM</text><text transform="translate(313.6,196.2) rotate(-45)" font-size="8.4" letter-spacing=".2" fill="#666" text-anchor="end">8 PM</text><text transform="translate(335.7,196.2) rotate(-45)" font-size="8.4" letter-spacing=".2" fill="#666" text-anchor="end">9 PM</text><text transform="translate(357.9,196.2) rotate(-45)" font-size="8.4" letter-spacing=".2" fill="#666" text-anchor="end">10 PM</text><text transform="translate(380.1,196.2) rotate(-45)" font-size="8.4" letter-spacing=".2" fill="#666" text-anchor="end">11 PM</text><text transform="translate(402.3,196.2) rotate(-45)" font-size="8.4" letter-spacing=".2" fill="#666" text-anchor="end">Feb 09, 2021 12 AM</text><text transform="translate(424.5,196.2) rotate(-45)" font-size="8.4" letter-spacing=".2" fill="#666" text-anchor="end">1 AM</text><text transform="translate(446.7,196.2) rotate(-45)" font-size="8.4" letter-spacing=".2" fill="#666" text-anchor="end">2 AM</text><text transform="translate(468.9,196.2) rotate(-45)" font-size="8.4" letter-spacing=".2" fill="#666" text-anchor="end">3 AM</text><text transform="translate(491.1,196.2) rotate(-45)" font-size="8.4" letter-spacing=".2" fill="#666" text-anchor="end">4 AM</text><text transform="translate(513.2,196.2) rotate(-45)" font-size="8.4" letter-spacing=".2" fill="#666" text-anchor="end">5 AM</text><text transform="translate(535.4,196.2) rotate(-45)" font-size="8.4" letter-spacing=".2" fill="#666" text-anchor="end">6 AM</text><text transform="translate(557.6,196.2) rotate(-45)" font-size="8.4" letter-spacing=".2" fill="#666" text-anchor="end">7 AM</text><text transform="translate(579.8,196.2) rotate(-45)" font-size="8.4" letter-spacing=".2" fill="#666" text-anchor="end">8 AM</text><text x="298.0" y="17.5" font-size="13.6" letter-spacing=".65" fill="#333" text-anchor="middle">Bishkek – PM2.5</text><text transform="translate(21.6,112.3) rotate(-90)" font-size="9" fill="#111" text-anchor="middle">AQI</text><rect x="281.0" y="271.4" width="12" height="9" fill="#ccc"/><text x="297.0" y="279.8" font-size="9.3" font-weight="bold" fill="#222">AQI</text></svg></div>

<div id="cc" class="abs">
<div class="h abs"><div style="font-size:11.2px;line-height:13px;margin-top:5.7px">Current Conditions</div><div style="font-size:9px;line-height:11px;margin-top:5.1px">observed at</div><div style="font-size:11.2px;line-height:13px;margin-top:2.4px">Feb 9, 2021 8:00 AM (LT)</div></div>
<div class="y abs">64 AQI<br>Moderate<br>PM2.5</div>
<div class="hm abs">Health Message</div>
<div class="tx abs">The AQI is between 51 and 100. Air quality<br>is acceptable; however, pollution in this<br>range may pose a moderate health concern<br>for a very small number of individuals.<br>People who are unusually sensitive to<br>ozone or particle pollution may experience<br>respiratory symptoms.</div>
</div>
</body></html>
